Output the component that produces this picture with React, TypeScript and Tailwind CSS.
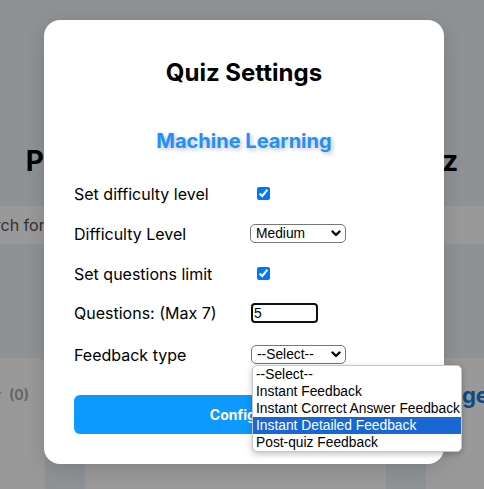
import React from "react";

function Chevron() {
  return (
    <svg
      width="10"
      height="7"
      viewBox="0 0 10 7"
      className="pointer-events-none absolute right-[5px] top-[6px]"
    >
      <path d="M1.5 1.5 L5 5 L8.5 1.5" fill="none" stroke="#000" strokeWidth="2.4" strokeLinecap="round" strokeLinejoin="round" />
    </svg>
  );
}

function FakeSelect({ value, width, options }: { value: string; width: string; options: string[] }) {
  return (
    <div className={`relative h-[19px] ${width}`}>
      <select
        defaultValue={value}
        className="block h-[19px] w-full appearance-none rounded-[5px] border border-[#767676] bg-white py-0 pl-[5px] font-['Liberation_Sans',Arial,sans-serif] text-[13.8px] leading-[17px] text-black outline-none"
      >
        {options.map((o) => (
          <option key={o}>{o}</option>
        ))}
      </select>
      <Chevron />
    </div>
  );
}

const feedbackOptions = [
  "--Select--",
  "Instant Feedback",
  "Instant Correct Answer Feedback",
  "Instant Detailed Feedback",
  "Post-quiz Feedback",
];

export default function App() {
  return (
    <div className="relative h-[489px] w-full overflow-hidden bg-[#eef3f8] font-['Inter',sans-serif]">
      {/* page behind */}
      <div className="pt-[144px]">
        <h1 className="whitespace-nowrap text-center text-[28px] font-bold leading-[34px] text-black">
          Pick a Topic and Take Your Quiz
        </h1>
        <div className="mt-[28px] -ml-[46px] -mr-[20px] flex h-[38px] items-center bg-white px-[12px] text-[16px] text-[#555]">
          Search for a quiz...
        </div>
        <div className="mt-[114px] -ml-[256px] flex gap-[40px]">
          <div className="flex h-[300px] w-[301px] shrink-0 justify-end rounded-[8px] bg-white pr-[16px] pt-[26px]">
            <div className="flex h-[20px] items-center gap-[6px] text-[14px] font-bold text-[#aaa]">
              <svg width="14" height="14" viewBox="0 0 24 24">
                <path
                  d="M12 1.8l3.1 6.6 7.2.9-5.3 5 1.4 7.1L12 17.9l-6.4 3.5 1.4-7.1-5.3-5 7.2-.9z"
                  fill="#f5b800"
                />
              </svg>
              <span>(0)</span>
            </div>
          </div>
          <div className="h-[300px] w-[301px] shrink-0 rounded-[8px] bg-white" />
          <div className="h-[300px] w-[301px] shrink-0 rounded-[8px] bg-white pl-[20px] pt-[22px]">
            <div className="whitespace-nowrap text-[22px] font-bold leading-[30px] text-[#1a7ae0]">Agentic AI</div>
          </div>
        </div>
      </div>

      {/* overlay */}
      <div className="absolute inset-0 bg-black/40 pl-[44px] pt-[20px]">
        <div className="flex h-[444px] w-[400px] flex-col rounded-[16px] bg-white px-[30px] pt-[37px] shadow-[0_4px_20px_rgba(0,0,0,0.15)]">
          <h2 className="text-center text-[24px] font-bold leading-[32px] text-black">Quiz Settings</h2>
          <h3 className="mt-[40px] text-center text-[20px] font-bold leading-[24px] text-[#1e90ff] [text-shadow:2px_2px_4px_rgba(0,0,0,0.25)]">
            Machine Learning
          </h3>

          <div className="mt-[28.5px] flex flex-col text-[16px] leading-[24px] text-black">
            <div className="grid h-[24px] grid-cols-[176px_1fr] items-center">
              <span>Set difficulty level</span>
              <div className="flex items-center">
                <input type="checkbox" defaultChecked className="m-0 ml-[7px] h-[13px] w-[13px]" />
              </div>
            </div>
            <div className="mt-[16px] grid h-[24px] grid-cols-[176px_1fr] items-center">
              <span>Difficulty Level</span>
              <FakeSelect value="Medium" width="w-[96px]" options={["Easy", "Medium", "Hard"]} />
            </div>
            <div className="mt-[16px] grid h-[24px] grid-cols-[176px_1fr] items-center">
              <span>Set questions limit</span>
              <div className="flex items-center">
                <input type="checkbox" defaultChecked className="m-0 ml-[7px] h-[13px] w-[13px]" />
              </div>
            </div>
            <div className="mt-[15.5px] grid h-[24px] grid-cols-[176px_1fr] items-center">
              <span>Questions: (Max 7)</span>
              <input
                type="text"
                defaultValue="5"
                className="ml-px h-[20px] w-[67px] rounded-[4px] border-2 border-[#101010] bg-white px-[1px] font-['Liberation_Sans',Arial,sans-serif] text-[13.8px] leading-[16px] text-black outline-none"
              />
            </div>
            <div className="relative mt-[17.5px] grid h-[24px] grid-cols-[176px_1fr] items-center">
              <span>Feedback type</span>
              <div className="relative ml-px">
                <FakeSelect value="--Select--" width="w-[95px]" options={feedbackOptions} />
                <div className="absolute left-[1px] top-[20px] z-10 w-[210px] overflow-hidden rounded-[5px] border border-[#c8c8c8] bg-white font-['Liberation_Sans',Arial,sans-serif] text-[13.8px] leading-[17px] text-black shadow-[0_2px_6px_rgba(0,0,0,0.25)]">
                  {feedbackOptions.map((o, i) => (
                    <div
                      key={o}
                      className={
                        i === 3
                          ? "h-[17px] whitespace-nowrap bg-[#1967d2] pl-[3px] text-white"
                          : "h-[17px] whitespace-nowrap pl-[3px]"
                      }
                    >
                      {o}
                    </div>
                  ))}
                </div>
              </div>
            </div>
          </div>

          <button className="mt-[28px] h-[39px] w-full rounded-[6px] bg-[#0d99ff] text-[14px] font-bold text-white">
            Configure
          </button>
        </div>
      </div>
    </div>
  );
}
